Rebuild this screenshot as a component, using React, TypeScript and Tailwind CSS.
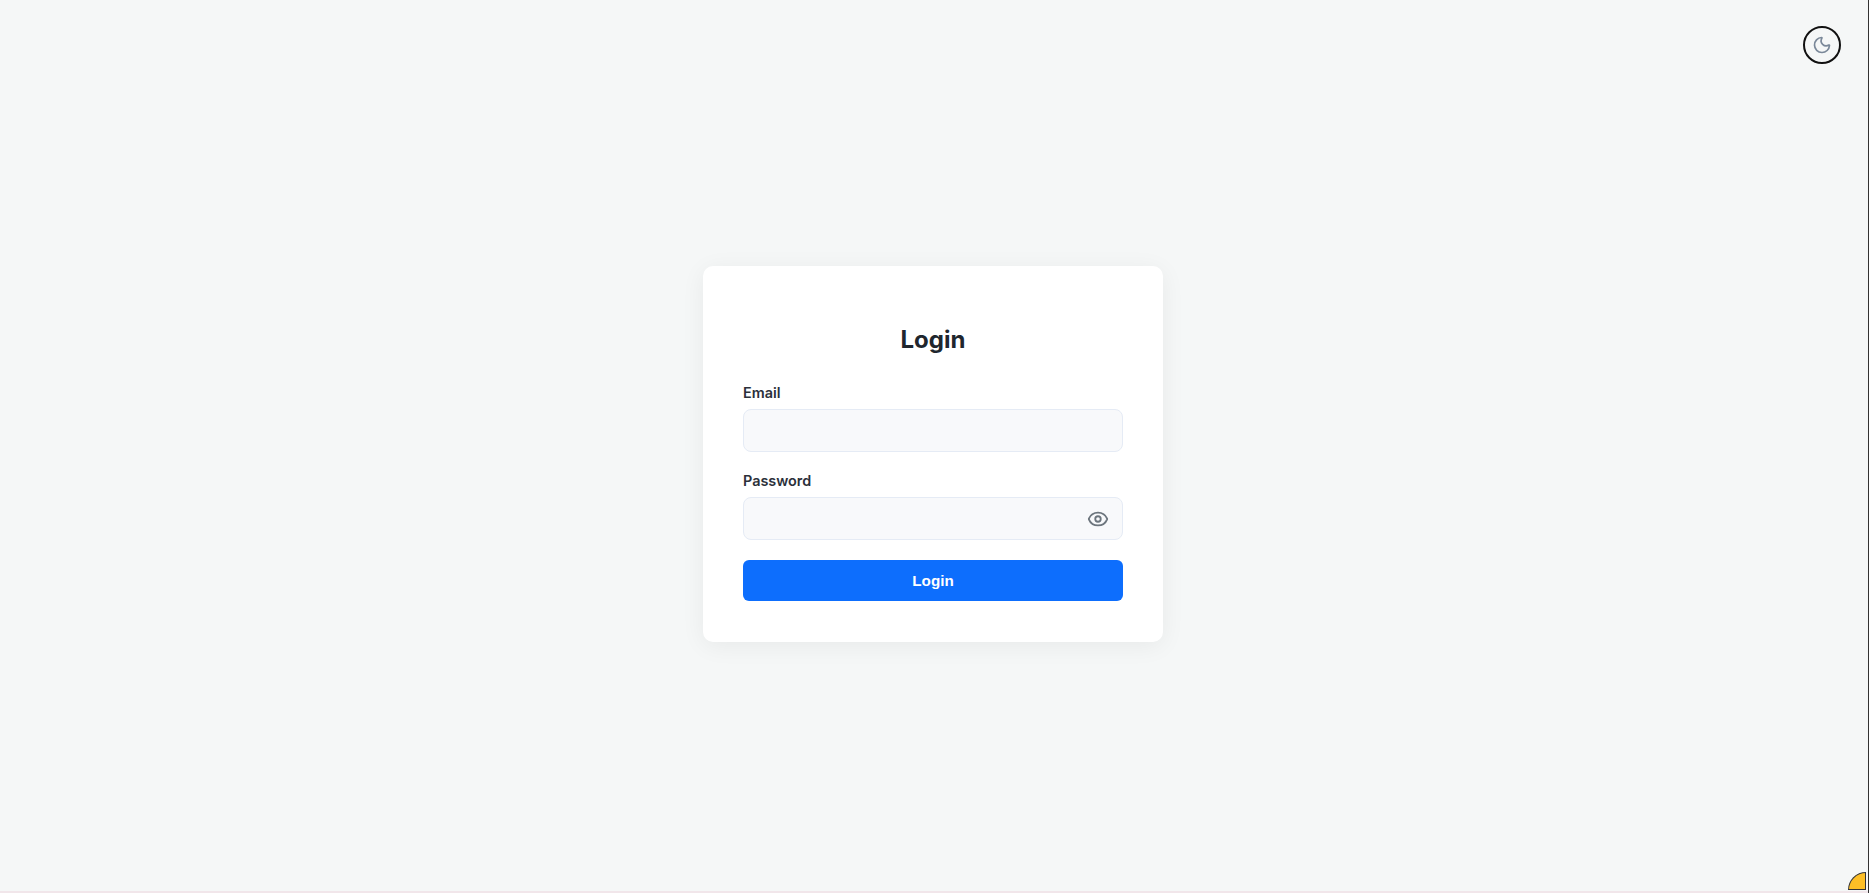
import { Eye, Moon } from "lucide-react";

export default function App() {
  return (
    <div className="relative flex h-[893px] w-full overflow-hidden bg-[#f5f7f7] font-['Inter',sans-serif]">
      <div className="flex flex-1 items-center justify-center pr-[3px] pt-[15px]">
        <div className="flex h-[376px] w-[460px] flex-col rounded-[10px] bg-white p-10 shadow-[0_4px_24px_rgba(0,0,0,0.06)]">
          <h1 className="mt-[19px] text-center text-2xl font-bold leading-[29px] text-[#20262e]">Login</h1>

          <label className="mt-[30px] text-[14.4px] font-semibold leading-[17px] text-[#2b303a]">Email</label>
          <input className="mt-[8px] h-[43px] w-full rounded-lg border border-[#e5ebf5] bg-[#f8f9fb] px-3 outline-none" />

          <label className="mt-[20px] text-[14.4px] font-semibold leading-[17px] text-[#2b303a]">Password</label>
          <div className="relative mt-[8px]">
            <input type="password" className="h-[43px] w-full rounded-lg border border-[#e5ebf5] bg-[#f8f9fb] px-3 outline-none" />
            <Eye className="absolute right-[14px] top-[11px] h-[22px] w-[22px] text-[#6c757d]" strokeWidth={2} />
          </div>

          <button className="mt-[20px] h-[41px] w-full rounded-md bg-[#0d6efd] pt-[2px] font-['Liberation_Sans',sans-serif] text-[15.2px] font-bold text-white">
            Login
          </button>
        </div>
      </div>

      <button className="absolute right-[28px] top-[26px] flex h-[38px] w-[38px] items-center justify-center rounded-full border-2 border-[#111] bg-transparent">
        <Moon className="h-5 w-5 text-[#7a8899]" strokeWidth={2} />
      </button>

      <div className="absolute bottom-[3px] right-[3px] h-[18px] w-[18px] rounded-tl-full border border-[#333] bg-[#fdbf26]" />
      <div className="absolute inset-x-0 bottom-0 h-[2px] bg-[#f1e6ea]" />
      <div className="absolute inset-y-0 right-0 w-px bg-[#333]" />
    </div>
  );
}
